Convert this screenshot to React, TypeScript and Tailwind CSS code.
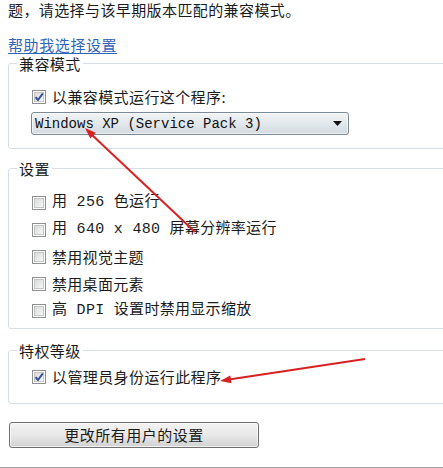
import React from "react";

const CJK = { fontFamily: '"Noto Sans CJK SC", "Liberation Sans", sans-serif' };
const MONO_CJK = { fontFamily: '"Liberation Mono", "Noto Sans CJK SC", monospace' };

function CheckBox({ checked }: { checked?: boolean }) {
  return (
    <div className="relative w-[14px] h-[14px] border border-[#8e8f8f] bg-white shrink-0">
      <div className="absolute inset-[1px] bg-gradient-to-br from-[#d9dadb] to-[#f7f7f7] border border-[#c4c5c6]" />
      {checked && (
        <svg className="absolute inset-0" width="12" height="12" viewBox="0 0 12 12">
          <path d="M2.5 6.2 L5 9 L9.8 2.5" fill="none" stroke="#2f4f9a" strokeWidth="2" strokeLinejoin="round" />
        </svg>
      )}
    </div>
  );
}

function Row({ checked, children, mono }: { checked?: boolean; children: React.ReactNode; mono?: boolean }) {
  return (
    <div className="flex items-center h-[27px] ml-[23px]">
      <CheckBox checked={checked} />
      <span className="ml-[6px] text-[15px] leading-[18px] text-[#1b1b1b] tracking-[0.3px]" style={mono ? MONO_CJK : CJK}>
        {children}
      </span>
    </div>
  );
}

function Group({ label, children, className }: { label: string; children: React.ReactNode; className?: string }) {
  return (
    <div className={`relative w-[460px] border border-[#d5dfe5] rounded-[3px] ${className ?? ""}`}>
      <span
        className="absolute -top-[8px] left-[8px] bg-white px-[2px] text-[15px] leading-[15px] text-[#1b1b1b] tracking-[0.4px]"
        style={CJK}
      >
        {label}
      </span>
      {children}
    </div>
  );
}

export default function App() {
  return (
    <div className="relative w-[443px] h-[468px] overflow-hidden bg-white pl-[8px]">
      <div className="h-[20px] text-[15px] leading-[20px] text-[#1b1b1b] tracking-[0.4px] whitespace-nowrap" style={CJK}>
        题，请选择与该早期版本匹配的兼容模式。
      </div>
      <div className="mt-[16px] h-[18px] leading-[18px]">
        <span className="text-[15px] text-[#2f64b8] underline underline-offset-2 tracking-[0.6px]" style={CJK}>
          帮助我选择设置
        </span>
      </div>

      <Group label="兼容模式" className="mt-[9px] h-[86px]">
        <div className="flex items-center h-[18px] mt-[24px] ml-[23px]">
          <CheckBox checked />
          <span className="ml-[6px] text-[15px] leading-[18px] text-[#1b1b1b] tracking-[0.4px]" style={CJK}>
            以兼容模式运行这个程序:
          </span>
        </div>
        <div className="mt-[6px] ml-[22px] w-[318px] h-[23px] border border-[#7a8a96] rounded-[3px] bg-gradient-to-b from-[#f1f4f6] via-[#e2e8ec] to-[#d3dbe1] flex items-center justify-between pl-[3px] pr-[6px] shadow-[inset_0_0_0_1px_rgba(255,255,255,0.6)]">
          <span className="text-[14px] leading-[18px] text-[#111]" style={MONO_CJK}>
            Windows XP (Service Pack 3)
          </span>
          <svg width="9" height="5" viewBox="0 0 9 5">
            <path d="M0 0 H9 L4.5 5 Z" fill="#111" />
          </svg>
        </div>
      </Group>

      <Group label="设置" className="mt-[19px] h-[161px] pt-[20px]">
        <Row mono>用 256 色运行</Row>
        <Row mono>用 640 x 480 屏幕分辨率运行</Row>
        <Row>禁用视觉主题</Row>
        <Row>禁用桌面元素</Row>
        <Row mono>高 DPI 设置时禁用显示缩放</Row>
      </Group>

      <Group label="特权等级" className="mt-[21px] h-[54px] pt-[17px]">
        <div className="flex items-center h-[18px] ml-[23px]">
          <CheckBox checked />
          <span className="ml-[6px] text-[15px] leading-[18px] text-[#1b1b1b] tracking-[0.4px]" style={CJK}>
            以管理员身份运行此程序
          </span>
        </div>
      </Group>

      <button
        className="mt-[18px] ml-[1px] w-[250px] h-[26px] border border-[#707070] rounded-[3px] bg-gradient-to-b from-[#f3f3f3] via-[#e8e8e8] to-[#d2d2d2] text-[15px] leading-[18px] text-[#1b1b1b] tracking-[0.5px] shadow-[inset_0_0_0_1px_rgba(255,255,255,0.7)]"
        style={CJK}
      >
        更改所有用户的设置
      </button>

      <div className="mt-[19px] -ml-[8px] w-[443px] h-[1px] bg-[#a0a0a0]" />

      <svg className="absolute inset-0 pointer-events-none" width="443" height="468" viewBox="0 0 443 468">
        <line x1="195" y1="232" x2="91" y2="134" stroke="#d92121" strokeWidth="2" />
        <polygon points="85,128 95.7,132.7 90.3,138.5" fill="#d92121" />
        <line x1="365" y1="359" x2="229" y2="379.6" stroke="#d92121" strokeWidth="2" />
        <polygon points="220,381 230.3,375.4 231.5,383.3" fill="#d92121" />
      </svg>
    </div>
  );
}
